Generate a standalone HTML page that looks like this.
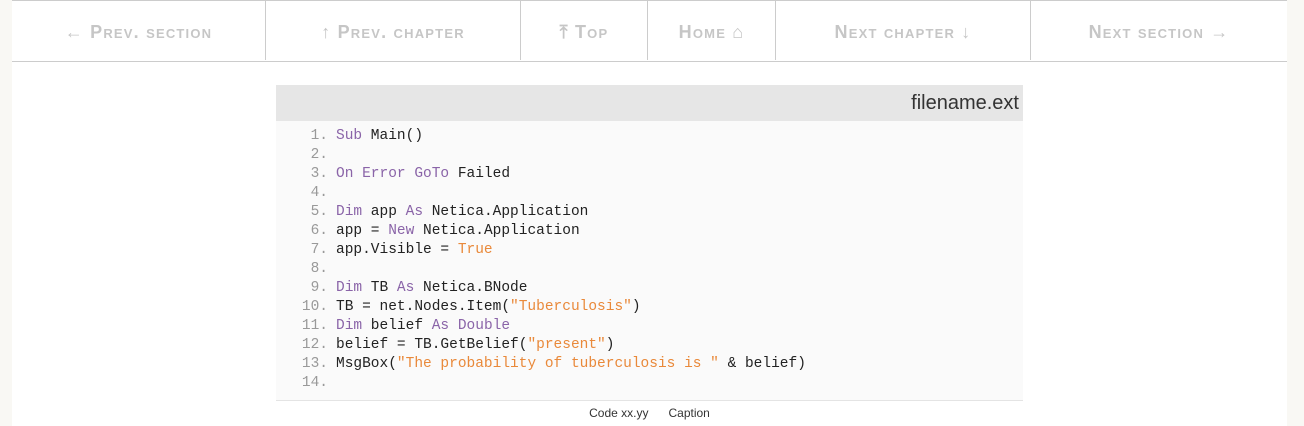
<!DOCTYPE html>
<html><head><style>
body{margin:0;background:#f9f8f4;width:1304px;height:426px;overflow:hidden;font-family:"Liberation Sans",sans-serif}
.page{position:absolute;left:12px;top:0;width:1275px;height:426px;background:#fff;border-top:1px solid #ccc;box-sizing:border-box}
.nav{position:absolute;left:0;top:0;width:1275px;height:60px;border-bottom:1px solid #ccc;display:flex}
.nav div{height:59px;padding-top:4px;border-right:1px solid #ccc;box-sizing:border-box;display:flex;align-items:center;justify-content:center;color:#c6c6c6;font-variant:small-caps;font-size:18px;font-weight:bold;letter-spacing:1.2px}
.hdr{position:absolute;left:264px;top:84px;width:747px;height:36px;background:#e6e6e6;font-size:20px;color:#333;text-align:right;box-sizing:border-box;padding-right:4px;line-height:36px}
.code{position:absolute;left:264px;top:120px;width:747px;height:280px;background:#fafafa;border-bottom:1px solid #e4e4e4;box-sizing:border-box;padding-top:6px;font-family:"Liberation Mono",monospace;font-size:14.5px;line-height:19px;color:#222}
.l{display:flex;height:19px;white-space:pre}
.n{width:60px;text-align:right;color:#999;padding-right:8px;box-sizing:border-box}
.k{color:#8a64a8}.s{color:#e9893a}
.cap{position:absolute;left:264px;top:405px;width:747px;text-align:center;font-size:12px;color:#333}
</style></head><body>
<div class="page">
<div class="nav">
<div style="width:254px">← Prev. section</div>
<div style="width:255px">↑ Prev. chapter</div>
<div style="width:127px">⤒ Top</div>
<div style="width:128px">Home ⌂</div>
<div style="width:255px">Next chapter ↓</div>
<div style="width:256px;border-right:none">Next section →</div>
</div>
<div class="hdr">filename.ext</div>
<div class="code">
<div class="l"><span class="n">1.</span><span><span class="k">Sub</span> Main()</span></div>
<div class="l"><span class="n">2.</span></div>
<div class="l"><span class="n">3.</span><span><span class="k">On Error GoTo</span> Failed</span></div>
<div class="l"><span class="n">4.</span></div>
<div class="l"><span class="n">5.</span><span><span class="k">Dim</span> app <span class="k">As</span> Netica.Application</span></div>
<div class="l"><span class="n">6.</span><span>app = <span class="k">New</span> Netica.Application</span></div>
<div class="l"><span class="n">7.</span><span>app.Visible = <span class="s">True</span></span></div>
<div class="l"><span class="n">8.</span></div>
<div class="l"><span class="n">9.</span><span><span class="k">Dim</span> TB <span class="k">As</span> Netica.BNode</span></div>
<div class="l"><span class="n">10.</span><span>TB = net.Nodes.Item(<span class="s">"Tuberculosis"</span>)</span></div>
<div class="l"><span class="n">11.</span><span><span class="k">Dim</span> belief <span class="k">As Double</span></span></div>
<div class="l"><span class="n">12.</span><span>belief = TB.GetBelief(<span class="s">"present"</span>)</span></div>
<div class="l"><span class="n">13.</span><span>MsgBox(<span class="s">"The probability of tuberculosis is "</span> &amp; belief)</span></div>
<div class="l"><span class="n">14.</span></div>
</div>
<div class="cap">Code xx.yy &nbsp;&nbsp;&nbsp;&nbsp; Caption</div>
</div>
</body></html>
